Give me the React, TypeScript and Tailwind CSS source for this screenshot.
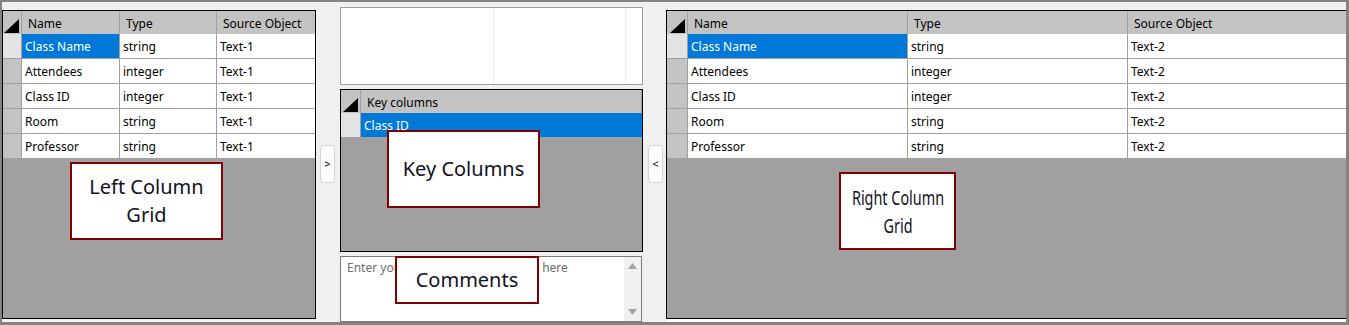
const FONT = "font-['Noto_Sans','Open_Sans',sans-serif]";

type Row = [string, string, string];

const leftRows: Row[] = [
  ['Class Name', 'string', 'Text-1'],
  ['Attendees', 'integer', 'Text-1'],
  ['Class ID', 'integer', 'Text-1'],
  ['Room', 'string', 'Text-1'],
  ['Professor', 'string', 'Text-1'],
];

const rightRows: Row[] = leftRows.map(([n, t]) => [n, t, 'Text-2']);

function Corner({ w }: { w: string }) {
  return (
    <div className={`${w} shrink-0 h-full border-r border-[#a0a0a0] flex items-end justify-end pb-[1px] pr-[2px]`}>
      <svg width="15" height="14" viewBox="0 0 15 14">
        <polygon points="15,0 15,14 0,14" fill="#000" />
      </svg>
    </div>
  );
}

function ColumnGrid({
  rows,
  rowHead,
  cols,
  className,
}: {
  rows: Row[];
  rowHead: string;
  cols: string[];
  className: string;
}) {
  const headers = ['Name', 'Type', 'Source Object'];
  return (
    <div className={`flex flex-col bg-[#a0a0a0] border-black ${className}`}>
      <div className="flex h-[23px] bg-[#c3c3c3] text-black">
        <Corner w={rowHead} />
        {headers.map((h, i) => (
          <div
            key={h}
            className={`${cols[i]} h-full flex items-center pl-[6px] pt-[2px] ${i < 2 ? 'border-r border-[#a0a0a0]' : ''}`}
          >
            {h}
          </div>
        ))}
      </div>
      {rows.map((r, ri) => (
        <div key={ri} className="flex h-[25px] border-b border-[#a0a0a0] bg-white">
          <div className={`${rowHead} shrink-0 border-r border-[#a0a0a0] ${ri === 0 ? 'bg-[#e3e3e3]' : 'bg-[#c3c3c3]'}`} />
          {r.map((c, ci) => (
            <div
              key={ci}
              className={`${cols[ci]} h-full flex items-center pl-[3px] pt-[1px] ${ci < 2 ? 'border-r border-[#a0a0a0]' : ''} ${
                ri === 0 && ci === 0 ? 'bg-[#0078d7] text-white' : 'text-black'
              }`}
            >
              {c}
            </div>
          ))}
        </div>
      ))}
    </div>
  );
}

function MoveButton({ label }: { label: string }) {
  return (
    <div className="w-[15px] h-[38px] mt-[143px] shrink-0 rounded-[4px] border border-[#d4d4d4] bg-[#fbfbfb] flex items-center justify-center text-[11px] text-black">
      {label}
    </div>
  );
}

function Label({ className, children }: { className: string; children: React.ReactNode }) {
  return (
    <div
      className={`absolute bg-white border-2 border-[#800000] flex items-center justify-center text-center text-[20px] leading-[28px] text-[#111122] whitespace-nowrap ${className}`}
    >
      {children}
    </div>
  );
}

export default function App() {
  return (
    <div className={`${FONT} text-[12px] relative w-[1349px] h-[325px] bg-[#f0f0f0] border-t-2 border-l-2 border-r-[3px] border-b-[3px] border-[#838383] flex items-start overflow-hidden`}>
      <ColumnGrid
        rows={leftRows}
        rowHead="w-[19px]"
        cols={['w-[98px]', 'w-[97px]', 'flex-1']}
        className="w-[314px] h-[309px] mt-[8px] border"
      />

      <div className="ml-[4px]">
        <MoveButton label=">" />
      </div>

      <div className="ml-[5px] w-[303px] pt-[5px] flex flex-col gap-[4px]">
        <div className="h-[78px] bg-white border border-[#a0a0a0] flex">
          <div className="w-[153px] border-r border-[#ececec]" />
          <div className="w-[132px] border-r border-[#ececec]" />
          <div className="flex-1" />
        </div>

        <div className="h-[163px] border border-black bg-[#a0a0a0] flex flex-col">
          <div className="flex h-[23px] bg-[#c3c3c3]">
            <Corner w="w-[20px]" />
            <div className="flex-1 flex items-center pl-[6px] pt-[2px] border-r border-[#a0a0a0] text-black">Key columns</div>
          </div>
          <div className="flex h-[25px] border-b border-[#a0a0a0]">
            <div className="w-[20px] shrink-0 bg-[#e3e3e3] border-r border-[#a0a0a0]" />
            <div className="flex-1 bg-[#0078d7] text-white flex items-center pl-[3px] pt-[1px]">Class ID</div>
          </div>
        </div>

        <div className="w-[302px] h-[66px] bg-white border border-[#7a7a7a] flex">
          <div className="flex-1 pl-[6px] pt-[2px] text-[#6d6d6d] whitespace-nowrap overflow-hidden">
            Enter your relationship comments here
          </div>
          <div className="w-[17px] bg-[#f0f0f0] flex flex-col items-center justify-between py-[6px]">
            <svg width="9" height="6" viewBox="0 0 9 6">
              <polygon points="4.5,0 9,6 0,6" fill="#a3a3a3" />
            </svg>
            <svg width="9" height="6" viewBox="0 0 9 6">
              <polygon points="0,0 9,0 4.5,6" fill="#a3a3a3" />
            </svg>
          </div>
        </div>
      </div>

      <div className="ml-[5px]">
        <MoveButton label="<" />
      </div>

      <div className="ml-[3px] flex-1 flex flex-col mt-[8px]">
        <ColumnGrid
          rows={rightRows}
          rowHead="w-[21px]"
          cols={['w-[220px]', 'w-[220px]', 'flex-1']}
          className="h-[309px] border-t border-l border-b"
        />
        <div className="h-[3px] bg-white" />
      </div>

      <Label className="left-[68px] top-[160px] w-[153px] h-[78px]">
        Left Column
        <br />
        Grid
      </Label>
      <Label className="left-[385px] top-[128px] w-[153px] h-[78px]">Key Columns</Label>
      <Label className="left-[393px] top-[254px] w-[144px] h-[48px]">Comments</Label>
      <Label className="left-[837px] top-[170px] w-[117px] h-[78px]">
        <span className="inline-block scale-x-[0.72] pt-[1px]">
          Right Column
          <br />
          Grid
        </span>
      </Label>
    </div>
  );
}
